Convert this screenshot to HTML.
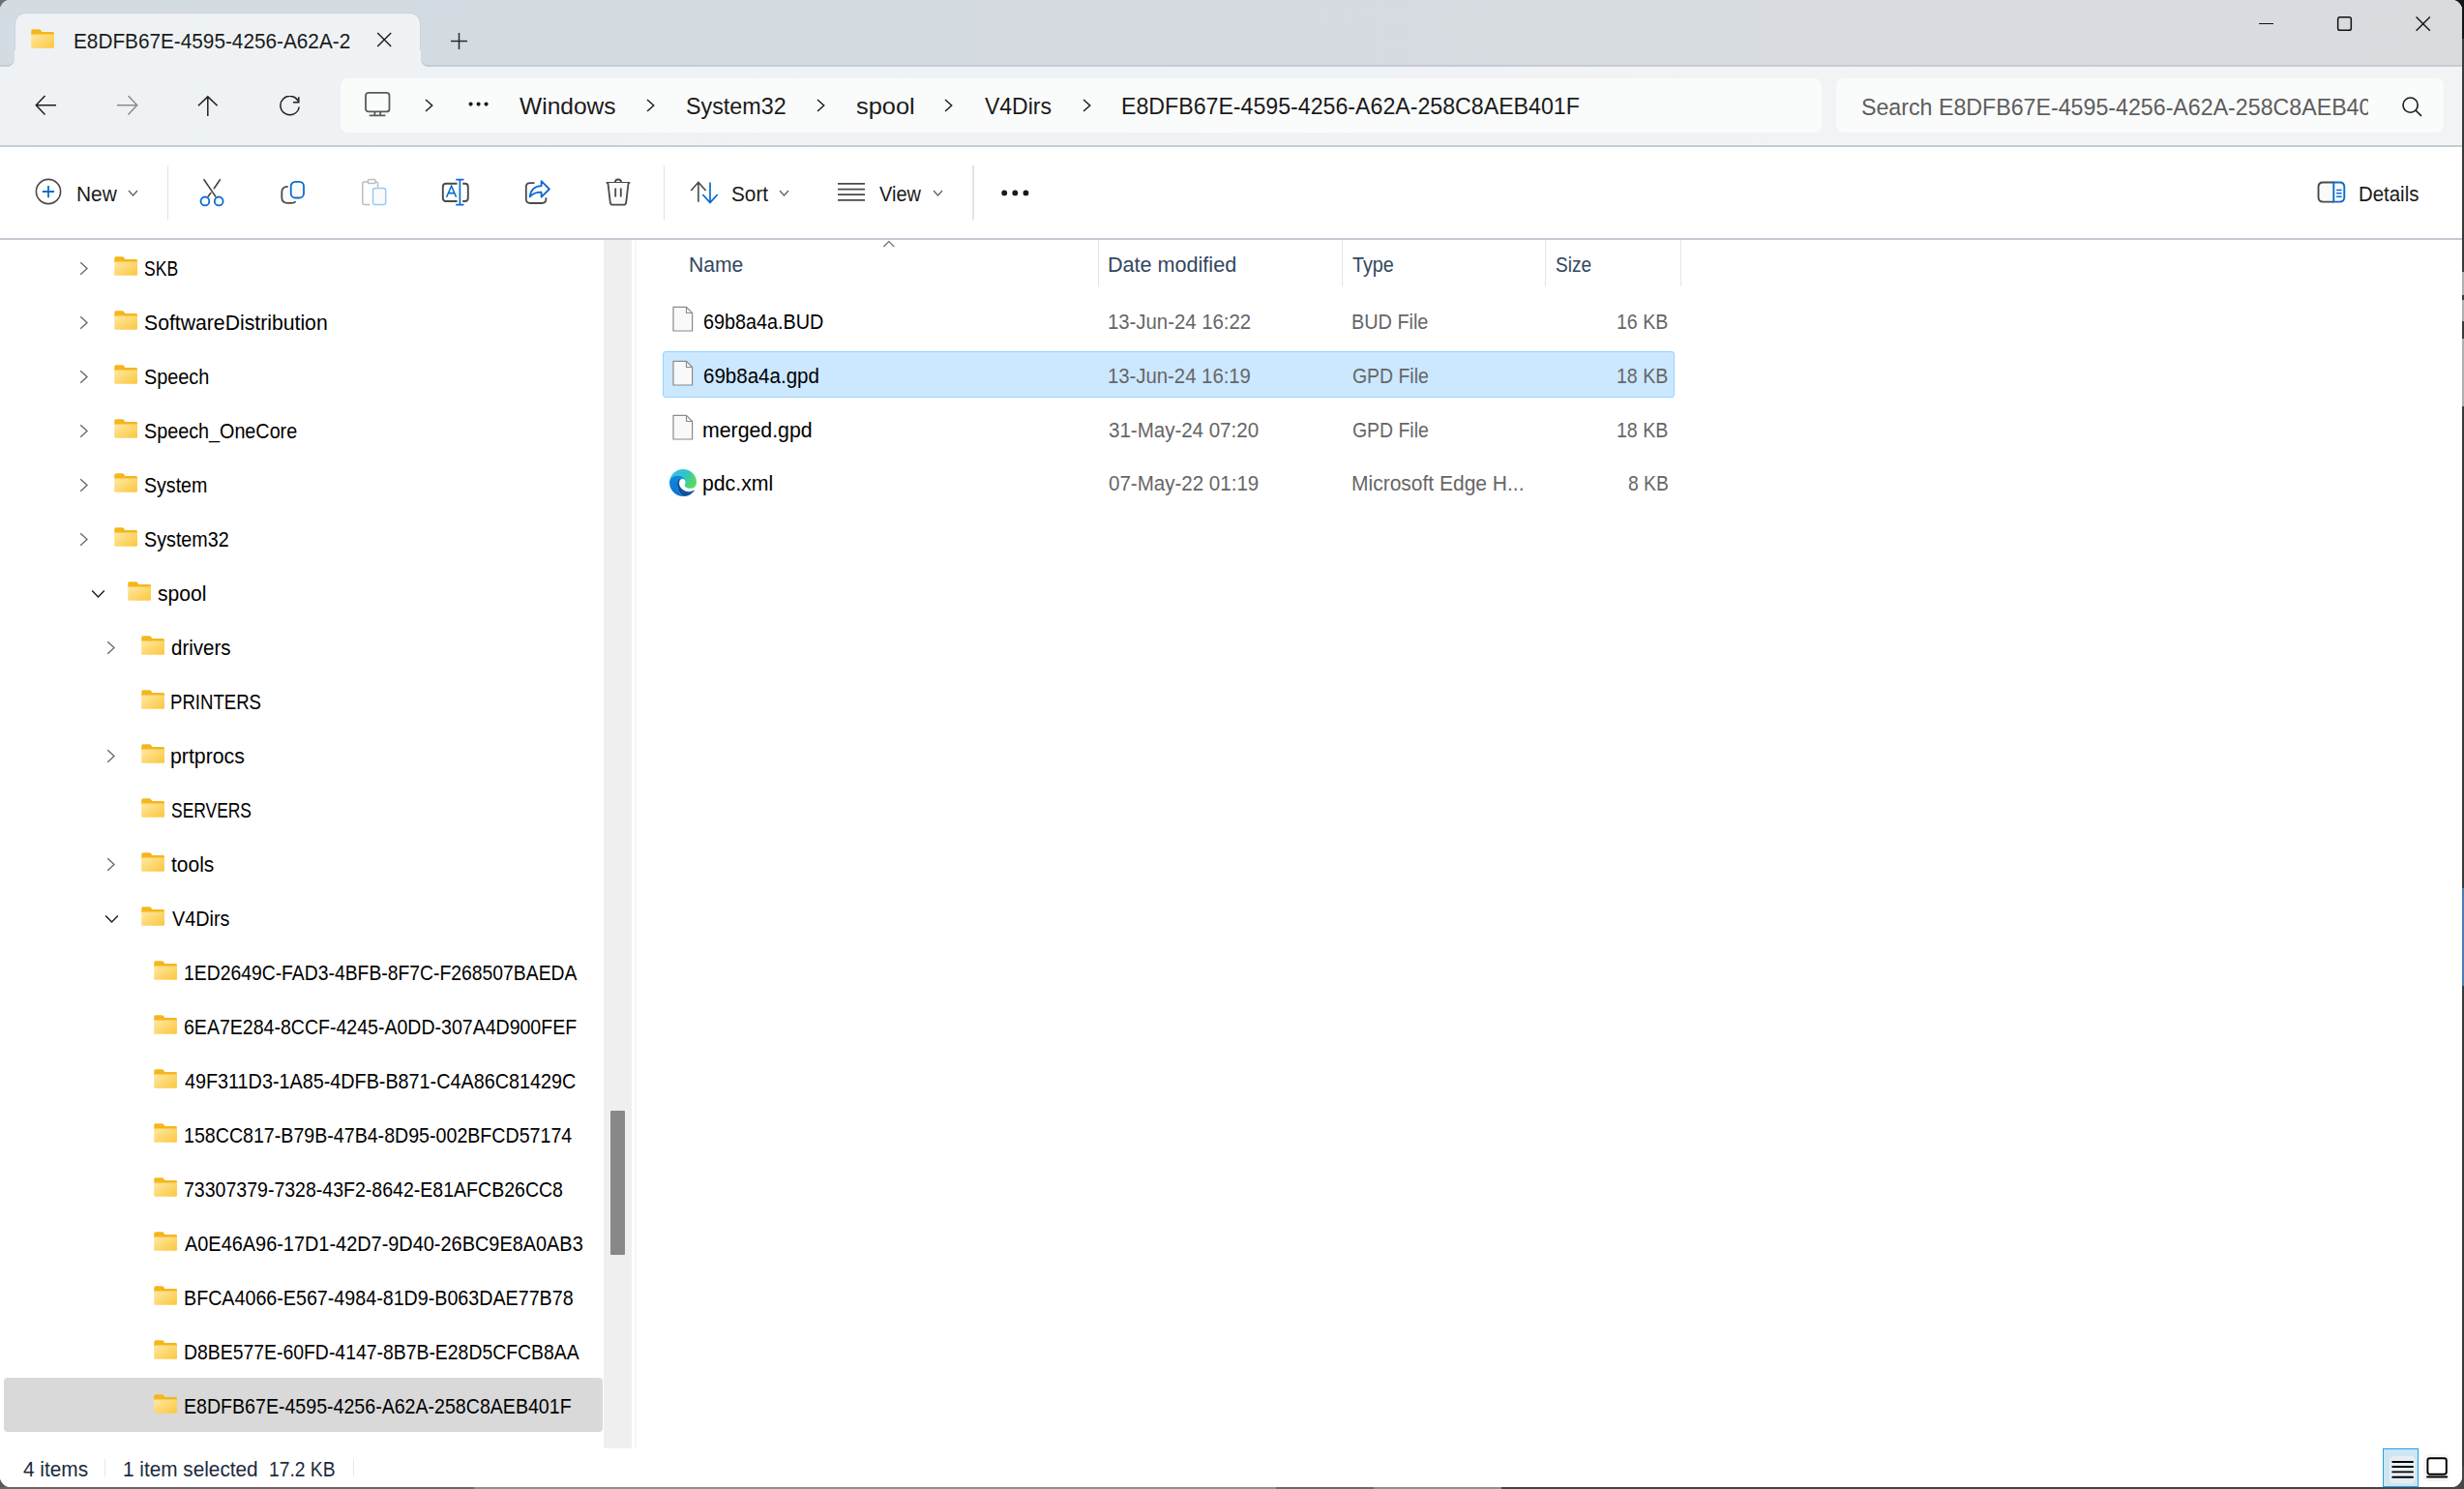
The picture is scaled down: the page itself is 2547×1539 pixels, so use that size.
<!DOCTYPE html>
<html><head><meta charset="utf-8"><title>File Explorer</title>
<style>
*{margin:0;padding:0;box-sizing:border-box}
html,body{width:2547px;height:1539px;overflow:hidden}
body{background:#3c3c3c;font-family:"Liberation Sans",sans-serif;position:relative}
.win{position:absolute;left:0;top:0;width:2545px;height:1537px;border-radius:11px;overflow:hidden;background:#fff}
.a{position:absolute;display:block}
.t{position:absolute;white-space:nowrap;transform-origin:0 0}
</style></head><body>
<div class="a" style="left:2520px;top:0px;width:27px;height:1539px;background:#3b3b3b"></div>
<div class="a" style="left:2520px;top:0px;width:27px;height:40px;background:#151515"></div>
<div class="a" style="left:0px;top:0px;width:30px;height:30px;background:#6f6f6f"></div>
<div class="a" style="left:2545px;top:281px;width:2px;height:24px;background:#b0b0b0"></div>
<div class="a" style="left:2545px;top:310px;width:2px;height:22px;background:#b0b0b0"></div>
<div class="a" style="left:2545px;top:350px;width:2px;height:70px;background:#b0b0b0"></div>
<div class="a" style="left:2545px;top:918px;width:2px;height:101px;background:#4a7db5"></div>
<div class="a" style="left:0px;top:1515px;width:1552px;height:24px;background:#8f8f8f"></div>
<div class="a" style="left:1552px;top:1515px;width:995px;height:24px;background:#474747"></div>
<div class="a" style="left:0px;top:1515px;width:30px;height:24px;background:#5a5a5a"></div>
<div class="a" style="left:0px;top:1537px;width:490px;height:2px;background:#666"></div>
<div class="a" style="left:1319px;top:1537px;width:101px;height:2px;background:#6a6a6a"></div>
<div class="win">
<div class="a" style="left:0px;top:0px;width:2545px;height:151px;background:linear-gradient(90deg,#eef2f5 0px,#f0f3f5 1200px,#f2f3f5 2545px)"></div>
<div class="a" style="left:0px;top:0px;width:2545px;height:40px;background:linear-gradient(90deg,#d2dce2 0px,#d3dbe1 700px,#d6dbe1 1300px,#d9dcdf 2545px)"></div>
<div class="a" style="left:0px;top:0px;width:15px;height:69px;background:linear-gradient(90deg,#d2dce2 0px,#d3dbe1 700px,#d6dbe1 1300px,#d9dcdf 2545px);border-bottom:2px solid #c4ccd4;border-bottom-right-radius:8px"></div>
<div class="a" style="left:435px;top:0px;width:2110px;height:69px;background:linear-gradient(90deg,#d2dce2 0px,#d3dbe1 700px,#d6dbe1 1300px,#d9dcdf 2545px);background-position:-435px 0;background-size:2545px 69px;border-bottom:2px solid #c4ccd4;border-bottom-left-radius:8px"></div>
<div class="a" style="left:15px;top:13px;width:420px;height:45px;background:linear-gradient(90deg,#eef2f5 0px,#f0f3f5 1200px,#f2f3f5 2545px);border-radius:11px 11px 0 0;border:1px solid #cdd3d9;border-bottom:none"></div>
<div class="a" style="left:15px;top:52px;width:420px;height:17px;background:linear-gradient(90deg,#eef2f5 0px,#f0f3f5 1200px,#f2f3f5 2545px)"></div>
<div class="a" style="left:0px;top:150px;width:2545px;height:2px;background:#c5ccd3"></div>
<div class="a" style="left:0px;top:152px;width:2545px;height:94px;background:#fff"></div>
<div class="a" style="left:0px;top:246px;width:2545px;height:2px;background:#c3cad1"></div>
<div class="a" style="left:0px;top:248px;width:2545px;height:1289px;background:#fff"></div>
<svg class="a" style="left:32px;top:30px;" width="25" height="20" viewBox="0 0 25 20"><defs><linearGradient id="fg1" x1="0" y1="0" x2="1" y2="1"><stop offset="0" stop-color="#ffe9a6"/><stop offset="1" stop-color="#fbc73c"/></linearGradient></defs><path d="M0.3 1.8 Q0.3 0.2 1.9 0.2 L8.3 0.2 Q9.6 0.2 10.4 1.4 L11.3 3 L22.6 3 Q23.9 3 23.9 4.2 L23.9 6 L0.3 6 Z" fill="#f5b61c"/><rect x="0.2" y="5.2" width="23.8" height="14.6" rx="1.2" fill="url(#fg1)"/><rect x="0.2" y="5.2" width="23.8" height="0.9" fill="#f6c23c" opacity="0.6"/></svg>
<div class="t" style="left:75.84px;top:32.08px;font-size:22.5px;line-height:22.5px;color:#1a1a1a;transform:scaleX(0.9227);">E8DFB67E-4595-4256-A62A-2</div>
<svg class="a" style="left:389px;top:33px;" width="17" height="16" viewBox="0 0 17 16"><path d="M1.2 1 L15.2 15 M15.2 1 L1.2 15" stroke="#1c1c1c" stroke-width="1.4" fill="none"/></svg>
<svg class="a" style="left:465px;top:33px;" width="19" height="19" viewBox="0 0 19 19"><path d="M9.5 1 V18 M1 9.5 H18" stroke="#2a2a2a" stroke-width="1.5" fill="none"/></svg>
<div class="a" style="left:2335px;top:23.6px;width:15px;height:1.3px;background:#111"></div>
<svg class="a" style="left:2415px;top:16px;" width="18" height="18" viewBox="0 0 18 18"><rect x="1.65" y="1.65" width="13.7" height="13.7" rx="2.2" stroke="#111" stroke-width="1.5" fill="none"/></svg>
<svg class="a" style="left:2496px;top:16px;" width="18" height="18" viewBox="0 0 18 18"><path d="M1.6 1.6 L15.8 15.8 M15.8 1.6 L1.6 15.8" stroke="#111" stroke-width="1.4" fill="none"/></svg>
<svg class="a" style="left:36px;top:98px;" width="23" height="22" viewBox="0 0 23 22"><path d="M10.5 1 L1.3 10.7 L10.5 20.4 M1.3 10.7 H22" stroke="#1f1f1f" stroke-width="1.5" fill="none" stroke-linecap="butt"/></svg>
<svg class="a" style="left:120px;top:98px;" width="23" height="22" viewBox="0 0 23 22"><path d="M12.5 1 L21.7 10.7 L12.5 20.4 M21.7 10.7 H1" stroke="#8c8c8c" stroke-width="1.5" fill="none"/></svg>
<svg class="a" style="left:204px;top:98px;" width="22" height="23" viewBox="0 0 22 23"><path d="M1 11.2 L10.8 1.9 L20.6 11.2 M10.8 1.9 V22" stroke="#1f1f1f" stroke-width="1.5" fill="none" stroke-linecap="butt"/></svg>
<svg class="a" style="left:288px;top:99px;" width="23" height="23" viewBox="0 0 23 23"><path d="M20.2 5.5 A9.7 9.7 0 1 0 21.2 11.5" stroke="#1f1f1f" stroke-width="1.5" fill="none" stroke-linecap="butt"/><path d="M20.8 1.2 V6.8 H15" stroke="#1f1f1f" stroke-width="1.5" fill="none" stroke-linecap="butt"/></svg>
<div class="a" style="left:352px;top:81px;width:1531px;height:56px;background:#fafbfb;border-radius:7px"></div>
<svg class="a" style="left:376px;top:94px;" width="28" height="28" viewBox="0 0 28 28"><rect x="2" y="1.8" width="24.5" height="19.6" rx="3" stroke="#5a5a5a" stroke-width="1.8" fill="none"/><path d="M11.4 21.5 V25 M17.2 21.5 V25 M5.8 25.3 H22.4" stroke="#5a5a5a" stroke-width="1.8" fill="none"/></svg>
<svg class="a" style="left:439px;top:102px;" width="9" height="14" viewBox="0 0 9 14"><path d="M1 1 L7.7 7.0 L1 13" stroke="#1f1f1f" stroke-width="1.5" fill="none"/></svg>
<svg class="a" style="left:483px;top:104px;" width="23" height="7" viewBox="0 0 23 7"><circle cx="3.6" cy="3.6" r="2.05" fill="#1a1a1a"/><circle cx="11.6" cy="3.6" r="2.05" fill="#1a1a1a"/><circle cx="19.6" cy="3.6" r="2.05" fill="#1a1a1a"/></svg>
<div class="t" style="left:537.28px;top:97.77px;font-size:24.5px;line-height:24.5px;color:#1a1a1a;transform:scaleX(1.0024);">Windows</div>
<svg class="a" style="left:668px;top:102px;" width="9" height="14" viewBox="0 0 9 14"><path d="M1 1 L7.7 7.0 L1 13" stroke="#1f1f1f" stroke-width="1.5" fill="none"/></svg>
<div class="t" style="left:708.85px;top:97.77px;font-size:24.5px;line-height:24.5px;color:#1a1a1a;transform:scaleX(0.9514);">System32</div>
<svg class="a" style="left:843.5px;top:102px;" width="9" height="14" viewBox="0 0 9 14"><path d="M1 1 L7.7 7.0 L1 13" stroke="#1f1f1f" stroke-width="1.5" fill="none"/></svg>
<div class="t" style="left:884.64px;top:97.77px;font-size:24.5px;line-height:24.5px;color:#1a1a1a;transform:scaleX(1.0351);">spool</div>
<svg class="a" style="left:975.5px;top:102px;" width="9" height="14" viewBox="0 0 9 14"><path d="M1 1 L7.7 7.0 L1 13" stroke="#1f1f1f" stroke-width="1.5" fill="none"/></svg>
<div class="t" style="left:1018.19px;top:97.77px;font-size:24.5px;line-height:24.5px;color:#1a1a1a;transform:scaleX(0.9377);">V4Dirs</div>
<svg class="a" style="left:1118.7px;top:102px;" width="9" height="14" viewBox="0 0 9 14"><path d="M1 1 L7.7 7.0 L1 13" stroke="#1f1f1f" stroke-width="1.5" fill="none"/></svg>
<div class="t" style="left:1159.15px;top:97.77px;font-size:24.5px;line-height:24.5px;color:#1a1a1a;transform:scaleX(0.9454);">E8DFB67E-4595-4256-A62A-258C8AEB401F</div>
<div class="a" style="left:1898px;top:81px;width:628px;height:56px;background:#fafbfb;border-radius:7px"></div>
<div class="a" style="left:1920px;top:85px;width:528px;height:45px;overflow:hidden">
<div class="t" style="left:4.46px;top:14.38px;font-size:24.5px;line-height:24.5px;color:#5d5d5d;transform:scaleX(0.9468);">Search E8DFB67E-4595-4256-A62A-258C8AEB401F</div>
</div>
<svg class="a" style="left:2482px;top:99px;" width="24" height="23" viewBox="0 0 24 23"><circle cx="9.6" cy="9.6" r="7.6" stroke="#1a1a1a" stroke-width="1.6" fill="none"/><path d="M15 15 L21 21" stroke="#1a1a1a" stroke-width="1.7"/></svg>
<svg class="a" style="left:36px;top:184px;" width="28" height="28" viewBox="0 0 28 28"><circle cx="14" cy="14" r="12.6" stroke="#4a4a4a" stroke-width="1.6" fill="none"/><path d="M14 8 V20.2 M7.9 14 H20.1" stroke="#0a6cd2" stroke-width="1.8"/></svg>
<div class="t" style="left:78.73px;top:190.92px;font-size:21.5px;line-height:21.5px;color:#1a1a1a;transform:scaleX(0.9713);">New</div>
<svg class="a" style="left:132px;top:196px;" width="11" height="7" viewBox="0 0 11 7"><path d="M1 1 L5.5 6 L10 1" stroke="#5e5e5e" stroke-width="1.2" fill="none"/></svg>
<div class="a" style="left:172.5px;top:171px;width:1.5px;height:56px;background:#e3e3e3"></div>
<svg class="a" style="left:205px;top:184px;" width="28" height="30" viewBox="0 0 28 30"><path d="M5.6 1.3 L18.2 19.6 M22.8 1.3 L15.9 11.2 M13.2 15 L9.8 19.6" stroke="#444" stroke-width="1.6" fill="none"/><circle cx="6.9" cy="23.9" r="4.4" stroke="#0a6cd2" stroke-width="1.8" fill="none"/><circle cx="21.2" cy="23.9" r="4.4" stroke="#0a6cd2" stroke-width="1.8" fill="none"/></svg>
<svg class="a" style="left:289px;top:185px;" width="28" height="28" viewBox="0 0 28 28"><path d="M8.7 7.8 H8.2 Q2.3 7.8 2.3 13.7 V19 Q2.3 24.9 8.2 24.9 H12.3 Q15.3 24.9 16.6 23.2" stroke="#4a4a4a" stroke-width="1.8" fill="#fafafa"/><rect x="11.7" y="2.9" width="13.3" height="16.6" rx="4.6" stroke="#0a6cd2" stroke-width="1.8" fill="#fafafa"/></svg>
<svg class="a" style="left:373px;top:184px;" width="28" height="30" viewBox="0 0 28 30"><path d="M7 4 H3.6 Q1.8 4 1.8 6 V25.5 Q1.8 27.4 3.8 27.4 H9.5" stroke="#bdbdbd" stroke-width="1.5" fill="none"/><path d="M17.5 9.5 V6 Q17.5 4 15.5 4 H14" stroke="#bdbdbd" stroke-width="1.5" fill="none"/><rect x="7.3" y="1.5" width="7.8" height="4" rx="1.8" stroke="#bdbdbd" stroke-width="1.5" fill="#fff"/><rect x="12.5" y="10.5" width="13.2" height="17" rx="2.3" stroke="#9ccaf2" stroke-width="1.5" fill="#fafafa"/></svg>
<svg class="a" style="left:456px;top:184px;" width="30" height="30" viewBox="0 0 30 30"><path d="M16.6 5.8 H5 Q1.8 5.8 1.8 9 V20.8 Q1.8 24 5 24 H16.6 M22.2 5.8 H24.5 Q27.8 5.8 27.8 9 V20.8 Q27.8 24 24.5 24 H22.2" stroke="#4a4a4a" stroke-width="1.9" fill="none"/><path d="M19.4 1.5 V27.7 M15.3 1.6 H23.5 M15.3 27.6 H23.5" stroke="#0a6cd2" stroke-width="1.7" fill="none"/><path d="M5.6 19.8 L10.6 8.3 L15.6 19.8 M7.5 15.6 H13.7" stroke="#0a6cd2" stroke-width="1.6" fill="none"/></svg>
<svg class="a" style="left:542px;top:185px;" width="28" height="28" viewBox="0 0 28 28"><path d="M10.5 4.1 H6 Q1.8 4.1 1.8 8.3 V20.8 Q1.8 25 6 25 H18.2 Q22.4 25 22.4 20.8 V19.2" stroke="#4a4a4a" stroke-width="1.8" fill="none"/><path d="M5.7 18.3 C6.5 11 11 7.5 17.6 7.2 V2.2 L25.9 10.5 L17.6 18.6 V13.7 C12.5 13.5 8.5 15.5 5.7 18.3 Z" stroke="#0a6cd2" stroke-width="1.8" fill="#fafafa" stroke-linejoin="round"/></svg>
<svg class="a" style="left:625px;top:184px;" width="28" height="30" viewBox="0 0 28 30"><path d="M1.6 4.8 H26.4 M10.7 4.5 Q11 1.5 14 1.5 Q17 1.5 17.3 4.5" stroke="#4a4a4a" stroke-width="1.8" fill="none"/><path d="M3.4 5 L5.8 25.3 Q6.1 27.6 8.4 27.6 H19.6 Q21.9 27.6 22.2 25.3 L24.6 5" stroke="#4a4a4a" stroke-width="1.8" fill="#fafafa"/><path d="M11.2 10.5 V19.5 M16.8 10.5 V19.5" stroke="#4a4a4a" stroke-width="1.8"/></svg>
<div class="a" style="left:685.5px;top:171px;width:1.5px;height:56px;background:#e3e3e3"></div>
<svg class="a" style="left:713px;top:187px;" width="31" height="24" viewBox="0 0 31 24"><path d="M1.2 10 L8.9 1.5 L16.6 10 M8.9 1.5 V21.7" stroke="#4a4a4a" stroke-width="1.6" fill="none"/><path d="M13.3 14 L21 22.4 L28.7 14 M21 22.4 V1.4" stroke="#0a6cd2" stroke-width="1.7" fill="none"/></svg>
<div class="t" style="left:755.66px;top:190.92px;font-size:21.5px;line-height:21.5px;color:#1a1a1a;transform:scaleX(0.9668);">Sort</div>
<svg class="a" style="left:804.5px;top:196px;" width="11" height="7" viewBox="0 0 11 7"><path d="M1 1 L5.5 6 L10 1" stroke="#5e5e5e" stroke-width="1.2" fill="none"/></svg>
<svg class="a" style="left:865px;top:188px;" width="30" height="21" viewBox="0 0 30 21"><path d="M1 1.9 H29 M1 7.6 H29 M1 13.2 H29 M1 18.9 H29" stroke="#4a4a4a" stroke-width="1.7"/></svg>
<div class="t" style="left:908.50px;top:190.92px;font-size:21.5px;line-height:21.5px;color:#1a1a1a;transform:scaleX(0.9281);">View</div>
<svg class="a" style="left:963.5px;top:196px;" width="11" height="7" viewBox="0 0 11 7"><path d="M1 1 L5.5 6 L10 1" stroke="#5e5e5e" stroke-width="1.2" fill="none"/></svg>
<div class="a" style="left:1005px;top:171px;width:1.5px;height:56px;background:#e3e3e3"></div>
<svg class="a" style="left:1034px;top:195px;" width="31" height="9" viewBox="0 0 31 9"><circle cx="4.2" cy="4.4" r="2.9" fill="#1a1a1a"/><circle cx="15.3" cy="4.4" r="2.9" fill="#1a1a1a"/><circle cx="26.4" cy="4.4" r="2.9" fill="#1a1a1a"/></svg>
<svg class="a" style="left:2395px;top:187px;" width="31" height="24" viewBox="0 0 31 24"><path d="M17.5 1.5 H6.3 Q1.5 1.5 1.5 6.3 V16.8 Q1.5 21.6 6.3 21.6 H17.5" stroke="#4a4a4a" stroke-width="1.9" fill="#fafafa"/><path d="M17.3 1.5 H23.5 Q28.3 1.5 28.3 6.3 V16.8 Q28.3 21.6 23.5 21.6 H17.3 Z" stroke="#0a6cd2" stroke-width="1.9" fill="#fafafa"/><path d="M20.7 9.5 H25 M20.7 12.8 H25 M20.7 16.3 H25" stroke="#0a6cd2" stroke-width="1.6" stroke-linecap="round"/></svg>
<div class="t" style="left:2438.37px;top:190.92px;font-size:21.5px;line-height:21.5px;color:#1a1a1a;transform:scaleX(0.9492);">Details</div>
<div class="a" style="left:624px;top:248px;width:29px;height:1249px;background:#efefef"></div>
<div class="a" style="left:631px;top:1148px;width:15px;height:149px;background:#888;border-radius:1px"></div>
<div class="a" style="left:656px;top:248px;width:2px;height:1249px;background:#f7f7f7"></div>
<div class="a" style="left:4px;top:1424px;width:619px;height:56px;background:#d9d9d9;border-radius:4px"></div>
<svg class="a" style="left:82px;top:269.8px;" width="10" height="15" viewBox="0 0 10 15"><path d="M1.2 1.2 L8 7.5 L1.2 13.8" stroke="#6b6b6b" stroke-width="1.4" fill="none"/></svg>
<svg class="a" style="left:117.7px;top:265.0px;" width="25" height="20" viewBox="0 0 25 20"><defs><linearGradient id="fg2" x1="0" y1="0" x2="1" y2="1"><stop offset="0" stop-color="#ffe9a6"/><stop offset="1" stop-color="#fbc73c"/></linearGradient></defs><path d="M0.3 1.8 Q0.3 0.2 1.9 0.2 L8.3 0.2 Q9.6 0.2 10.4 1.4 L11.3 3 L22.6 3 Q23.9 3 23.9 4.2 L23.9 6 L0.3 6 Z" fill="#f5b61c"/><rect x="0.2" y="5.2" width="23.8" height="14.6" rx="1.2" fill="url(#fg2)"/><rect x="0.2" y="5.2" width="23.8" height="0.9" fill="#f6c23c" opacity="0.6"/></svg>
<div class="t" style="left:149.01px;top:267.53px;font-size:21.5px;line-height:21.5px;color:#000;transform:scaleX(0.8155);">SKB</div>
<svg class="a" style="left:82px;top:325.8px;" width="10" height="15" viewBox="0 0 10 15"><path d="M1.2 1.2 L8 7.5 L1.2 13.8" stroke="#6b6b6b" stroke-width="1.4" fill="none"/></svg>
<svg class="a" style="left:117.7px;top:321.0px;" width="25" height="20" viewBox="0 0 25 20"><defs><linearGradient id="fg3" x1="0" y1="0" x2="1" y2="1"><stop offset="0" stop-color="#ffe9a6"/><stop offset="1" stop-color="#fbc73c"/></linearGradient></defs><path d="M0.3 1.8 Q0.3 0.2 1.9 0.2 L8.3 0.2 Q9.6 0.2 10.4 1.4 L11.3 3 L22.6 3 Q23.9 3 23.9 4.2 L23.9 6 L0.3 6 Z" fill="#f5b61c"/><rect x="0.2" y="5.2" width="23.8" height="14.6" rx="1.2" fill="url(#fg3)"/><rect x="0.2" y="5.2" width="23.8" height="0.9" fill="#f6c23c" opacity="0.6"/></svg>
<div class="t" style="left:148.85px;top:323.53px;font-size:21.5px;line-height:21.5px;color:#000;transform:scaleX(0.9860);">SoftwareDistribution</div>
<svg class="a" style="left:82px;top:381.8px;" width="10" height="15" viewBox="0 0 10 15"><path d="M1.2 1.2 L8 7.5 L1.2 13.8" stroke="#6b6b6b" stroke-width="1.4" fill="none"/></svg>
<svg class="a" style="left:117.7px;top:377.0px;" width="25" height="20" viewBox="0 0 25 20"><defs><linearGradient id="fg4" x1="0" y1="0" x2="1" y2="1"><stop offset="0" stop-color="#ffe9a6"/><stop offset="1" stop-color="#fbc73c"/></linearGradient></defs><path d="M0.3 1.8 Q0.3 0.2 1.9 0.2 L8.3 0.2 Q9.6 0.2 10.4 1.4 L11.3 3 L22.6 3 Q23.9 3 23.9 4.2 L23.9 6 L0.3 6 Z" fill="#f5b61c"/><rect x="0.2" y="5.2" width="23.8" height="14.6" rx="1.2" fill="url(#fg4)"/><rect x="0.2" y="5.2" width="23.8" height="0.9" fill="#f6c23c" opacity="0.6"/></svg>
<div class="t" style="left:148.91px;top:379.53px;font-size:21.5px;line-height:21.5px;color:#000;transform:scaleX(0.9231);">Speech</div>
<svg class="a" style="left:82px;top:437.8px;" width="10" height="15" viewBox="0 0 10 15"><path d="M1.2 1.2 L8 7.5 L1.2 13.8" stroke="#6b6b6b" stroke-width="1.4" fill="none"/></svg>
<svg class="a" style="left:117.7px;top:433.0px;" width="25" height="20" viewBox="0 0 25 20"><defs><linearGradient id="fg5" x1="0" y1="0" x2="1" y2="1"><stop offset="0" stop-color="#ffe9a6"/><stop offset="1" stop-color="#fbc73c"/></linearGradient></defs><path d="M0.3 1.8 Q0.3 0.2 1.9 0.2 L8.3 0.2 Q9.6 0.2 10.4 1.4 L11.3 3 L22.6 3 Q23.9 3 23.9 4.2 L23.9 6 L0.3 6 Z" fill="#f5b61c"/><rect x="0.2" y="5.2" width="23.8" height="14.6" rx="1.2" fill="url(#fg5)"/><rect x="0.2" y="5.2" width="23.8" height="0.9" fill="#f6c23c" opacity="0.6"/></svg>
<div class="t" style="left:148.91px;top:435.53px;font-size:21.5px;line-height:21.5px;color:#000;transform:scaleX(0.9191);">Speech_OneCore</div>
<svg class="a" style="left:82px;top:493.8px;" width="10" height="15" viewBox="0 0 10 15"><path d="M1.2 1.2 L8 7.5 L1.2 13.8" stroke="#6b6b6b" stroke-width="1.4" fill="none"/></svg>
<svg class="a" style="left:117.7px;top:489.0px;" width="25" height="20" viewBox="0 0 25 20"><defs><linearGradient id="fg6" x1="0" y1="0" x2="1" y2="1"><stop offset="0" stop-color="#ffe9a6"/><stop offset="1" stop-color="#fbc73c"/></linearGradient></defs><path d="M0.3 1.8 Q0.3 0.2 1.9 0.2 L8.3 0.2 Q9.6 0.2 10.4 1.4 L11.3 3 L22.6 3 Q23.9 3 23.9 4.2 L23.9 6 L0.3 6 Z" fill="#f5b61c"/><rect x="0.2" y="5.2" width="23.8" height="14.6" rx="1.2" fill="url(#fg6)"/><rect x="0.2" y="5.2" width="23.8" height="0.9" fill="#f6c23c" opacity="0.6"/></svg>
<div class="t" style="left:148.92px;top:491.53px;font-size:21.5px;line-height:21.5px;color:#000;transform:scaleX(0.9115);">System</div>
<svg class="a" style="left:82px;top:549.8px;" width="10" height="15" viewBox="0 0 10 15"><path d="M1.2 1.2 L8 7.5 L1.2 13.8" stroke="#6b6b6b" stroke-width="1.4" fill="none"/></svg>
<svg class="a" style="left:117.7px;top:545.0px;" width="25" height="20" viewBox="0 0 25 20"><defs><linearGradient id="fg7" x1="0" y1="0" x2="1" y2="1"><stop offset="0" stop-color="#ffe9a6"/><stop offset="1" stop-color="#fbc73c"/></linearGradient></defs><path d="M0.3 1.8 Q0.3 0.2 1.9 0.2 L8.3 0.2 Q9.6 0.2 10.4 1.4 L11.3 3 L22.6 3 Q23.9 3 23.9 4.2 L23.9 6 L0.3 6 Z" fill="#f5b61c"/><rect x="0.2" y="5.2" width="23.8" height="14.6" rx="1.2" fill="url(#fg7)"/><rect x="0.2" y="5.2" width="23.8" height="0.9" fill="#f6c23c" opacity="0.6"/></svg>
<div class="t" style="left:148.91px;top:547.52px;font-size:21.5px;line-height:21.5px;color:#000;transform:scaleX(0.9174);">System32</div>
<svg class="a" style="left:93.5px;top:608.8px;" width="15" height="10" viewBox="0 0 15 10"><path d="M1.2 1.5 L7.5 8 L13.8 1.5" stroke="#1f1f1f" stroke-width="1.5" fill="none"/></svg>
<svg class="a" style="left:131.7px;top:601.0px;" width="25" height="20" viewBox="0 0 25 20"><defs><linearGradient id="fg8" x1="0" y1="0" x2="1" y2="1"><stop offset="0" stop-color="#ffe9a6"/><stop offset="1" stop-color="#fbc73c"/></linearGradient></defs><path d="M0.3 1.8 Q0.3 0.2 1.9 0.2 L8.3 0.2 Q9.6 0.2 10.4 1.4 L11.3 3 L22.6 3 Q23.9 3 23.9 4.2 L23.9 6 L0.3 6 Z" fill="#f5b61c"/><rect x="0.2" y="5.2" width="23.8" height="14.6" rx="1.2" fill="url(#fg8)"/><rect x="0.2" y="5.2" width="23.8" height="0.9" fill="#f6c23c" opacity="0.6"/></svg>
<div class="t" style="left:163.17px;top:603.52px;font-size:21.5px;line-height:21.5px;color:#000;transform:scaleX(0.9809);">spool</div>
<svg class="a" style="left:110px;top:661.8px;" width="10" height="15" viewBox="0 0 10 15"><path d="M1.2 1.2 L8 7.5 L1.2 13.8" stroke="#6b6b6b" stroke-width="1.4" fill="none"/></svg>
<svg class="a" style="left:145.7px;top:657.0px;" width="25" height="20" viewBox="0 0 25 20"><defs><linearGradient id="fg9" x1="0" y1="0" x2="1" y2="1"><stop offset="0" stop-color="#ffe9a6"/><stop offset="1" stop-color="#fbc73c"/></linearGradient></defs><path d="M0.3 1.8 Q0.3 0.2 1.9 0.2 L8.3 0.2 Q9.6 0.2 10.4 1.4 L11.3 3 L22.6 3 Q23.9 3 23.9 4.2 L23.9 6 L0.3 6 Z" fill="#f5b61c"/><rect x="0.2" y="5.2" width="23.8" height="14.6" rx="1.2" fill="url(#fg9)"/><rect x="0.2" y="5.2" width="23.8" height="0.9" fill="#f6c23c" opacity="0.6"/></svg>
<div class="t" style="left:176.98px;top:659.52px;font-size:21.5px;line-height:21.5px;color:#000;transform:scaleX(0.9525);">drivers</div>
<svg class="a" style="left:145.7px;top:713.0px;" width="25" height="20" viewBox="0 0 25 20"><defs><linearGradient id="fg10" x1="0" y1="0" x2="1" y2="1"><stop offset="0" stop-color="#ffe9a6"/><stop offset="1" stop-color="#fbc73c"/></linearGradient></defs><path d="M0.3 1.8 Q0.3 0.2 1.9 0.2 L8.3 0.2 Q9.6 0.2 10.4 1.4 L11.3 3 L22.6 3 Q23.9 3 23.9 4.2 L23.9 6 L0.3 6 Z" fill="#f5b61c"/><rect x="0.2" y="5.2" width="23.8" height="14.6" rx="1.2" fill="url(#fg10)"/><rect x="0.2" y="5.2" width="23.8" height="0.9" fill="#f6c23c" opacity="0.6"/></svg>
<div class="t" style="left:176.31px;top:715.52px;font-size:21.5px;line-height:21.5px;color:#000;transform:scaleX(0.8642);">PRINTERS</div>
<svg class="a" style="left:110px;top:773.8px;" width="10" height="15" viewBox="0 0 10 15"><path d="M1.2 1.2 L8 7.5 L1.2 13.8" stroke="#6b6b6b" stroke-width="1.4" fill="none"/></svg>
<svg class="a" style="left:145.7px;top:769.0px;" width="25" height="20" viewBox="0 0 25 20"><defs><linearGradient id="fg11" x1="0" y1="0" x2="1" y2="1"><stop offset="0" stop-color="#ffe9a6"/><stop offset="1" stop-color="#fbc73c"/></linearGradient></defs><path d="M0.3 1.8 Q0.3 0.2 1.9 0.2 L8.3 0.2 Q9.6 0.2 10.4 1.4 L11.3 3 L22.6 3 Q23.9 3 23.9 4.2 L23.9 6 L0.3 6 Z" fill="#f5b61c"/><rect x="0.2" y="5.2" width="23.8" height="14.6" rx="1.2" fill="url(#fg11)"/><rect x="0.2" y="5.2" width="23.8" height="0.9" fill="#f6c23c" opacity="0.6"/></svg>
<div class="t" style="left:176.42px;top:771.52px;font-size:21.5px;line-height:21.5px;color:#000;transform:scaleX(0.9899);">prtprocs</div>
<svg class="a" style="left:145.7px;top:825.0px;" width="25" height="20" viewBox="0 0 25 20"><defs><linearGradient id="fg12" x1="0" y1="0" x2="1" y2="1"><stop offset="0" stop-color="#ffe9a6"/><stop offset="1" stop-color="#fbc73c"/></linearGradient></defs><path d="M0.3 1.8 Q0.3 0.2 1.9 0.2 L8.3 0.2 Q9.6 0.2 10.4 1.4 L11.3 3 L22.6 3 Q23.9 3 23.9 4.2 L23.9 6 L0.3 6 Z" fill="#f5b61c"/><rect x="0.2" y="5.2" width="23.8" height="14.6" rx="1.2" fill="url(#fg12)"/><rect x="0.2" y="5.2" width="23.8" height="0.9" fill="#f6c23c" opacity="0.6"/></svg>
<div class="t" style="left:177.02px;top:827.52px;font-size:21.5px;line-height:21.5px;color:#000;transform:scaleX(0.8107);">SERVERS</div>
<svg class="a" style="left:110px;top:885.8px;" width="10" height="15" viewBox="0 0 10 15"><path d="M1.2 1.2 L8 7.5 L1.2 13.8" stroke="#6b6b6b" stroke-width="1.4" fill="none"/></svg>
<svg class="a" style="left:145.7px;top:881.0px;" width="25" height="20" viewBox="0 0 25 20"><defs><linearGradient id="fg13" x1="0" y1="0" x2="1" y2="1"><stop offset="0" stop-color="#ffe9a6"/><stop offset="1" stop-color="#fbc73c"/></linearGradient></defs><path d="M0.3 1.8 Q0.3 0.2 1.9 0.2 L8.3 0.2 Q9.6 0.2 10.4 1.4 L11.3 3 L22.6 3 Q23.9 3 23.9 4.2 L23.9 6 L0.3 6 Z" fill="#f5b61c"/><rect x="0.2" y="5.2" width="23.8" height="14.6" rx="1.2" fill="url(#fg13)"/><rect x="0.2" y="5.2" width="23.8" height="0.9" fill="#f6c23c" opacity="0.6"/></svg>
<div class="t" style="left:177.49px;top:883.52px;font-size:21.5px;line-height:21.5px;color:#000;transform:scaleX(0.9754);">tools</div>
<svg class="a" style="left:107.5px;top:944.8px;" width="15" height="10" viewBox="0 0 15 10"><path d="M1.2 1.5 L7.5 8 L13.8 1.5" stroke="#1f1f1f" stroke-width="1.5" fill="none"/></svg>
<svg class="a" style="left:145.7px;top:937.0px;" width="25" height="20" viewBox="0 0 25 20"><defs><linearGradient id="fg14" x1="0" y1="0" x2="1" y2="1"><stop offset="0" stop-color="#ffe9a6"/><stop offset="1" stop-color="#fbc73c"/></linearGradient></defs><path d="M0.3 1.8 Q0.3 0.2 1.9 0.2 L8.3 0.2 Q9.6 0.2 10.4 1.4 L11.3 3 L22.6 3 Q23.9 3 23.9 4.2 L23.9 6 L0.3 6 Z" fill="#f5b61c"/><rect x="0.2" y="5.2" width="23.8" height="14.6" rx="1.2" fill="url(#fg14)"/><rect x="0.2" y="5.2" width="23.8" height="0.9" fill="#f6c23c" opacity="0.6"/></svg>
<div class="t" style="left:177.70px;top:939.52px;font-size:21.5px;line-height:21.5px;color:#000;transform:scaleX(0.9208);">V4Dirs</div>
<svg class="a" style="left:159.2px;top:993.0px;" width="25" height="20" viewBox="0 0 25 20"><defs><linearGradient id="fg15" x1="0" y1="0" x2="1" y2="1"><stop offset="0" stop-color="#ffe9a6"/><stop offset="1" stop-color="#fbc73c"/></linearGradient></defs><path d="M0.3 1.8 Q0.3 0.2 1.9 0.2 L8.3 0.2 Q9.6 0.2 10.4 1.4 L11.3 3 L22.6 3 Q23.9 3 23.9 4.2 L23.9 6 L0.3 6 Z" fill="#f5b61c"/><rect x="0.2" y="5.2" width="23.8" height="14.6" rx="1.2" fill="url(#fg15)"/><rect x="0.2" y="5.2" width="23.8" height="0.9" fill="#f6c23c" opacity="0.6"/></svg>
<div class="t" style="left:189.85px;top:995.52px;font-size:21.5px;line-height:21.5px;color:#000;transform:scaleX(0.8998);">1ED2649C-FAD3-4BFB-8F7C-F268507BAEDA</div>
<svg class="a" style="left:159.2px;top:1049.0px;" width="25" height="20" viewBox="0 0 25 20"><defs><linearGradient id="fg16" x1="0" y1="0" x2="1" y2="1"><stop offset="0" stop-color="#ffe9a6"/><stop offset="1" stop-color="#fbc73c"/></linearGradient></defs><path d="M0.3 1.8 Q0.3 0.2 1.9 0.2 L8.3 0.2 Q9.6 0.2 10.4 1.4 L11.3 3 L22.6 3 Q23.9 3 23.9 4.2 L23.9 6 L0.3 6 Z" fill="#f5b61c"/><rect x="0.2" y="5.2" width="23.8" height="14.6" rx="1.2" fill="url(#fg16)"/><rect x="0.2" y="5.2" width="23.8" height="0.9" fill="#f6c23c" opacity="0.6"/></svg>
<div class="t" style="left:190.32px;top:1051.52px;font-size:21.5px;line-height:21.5px;color:#000;transform:scaleX(0.9087);">6EA7E284-8CCF-4245-A0DD-307A4D900FEF</div>
<svg class="a" style="left:159.2px;top:1105.0px;" width="25" height="20" viewBox="0 0 25 20"><defs><linearGradient id="fg17" x1="0" y1="0" x2="1" y2="1"><stop offset="0" stop-color="#ffe9a6"/><stop offset="1" stop-color="#fbc73c"/></linearGradient></defs><path d="M0.3 1.8 Q0.3 0.2 1.9 0.2 L8.3 0.2 Q9.6 0.2 10.4 1.4 L11.3 3 L22.6 3 Q23.9 3 23.9 4.2 L23.9 6 L0.3 6 Z" fill="#f5b61c"/><rect x="0.2" y="5.2" width="23.8" height="14.6" rx="1.2" fill="url(#fg17)"/><rect x="0.2" y="5.2" width="23.8" height="0.9" fill="#f6c23c" opacity="0.6"/></svg>
<div class="t" style="left:190.90px;top:1107.52px;font-size:21.5px;line-height:21.5px;color:#000;transform:scaleX(0.9200);">49F311D3-1A85-4DFB-B871-C4A86C81429C</div>
<svg class="a" style="left:159.2px;top:1161.0px;" width="25" height="20" viewBox="0 0 25 20"><defs><linearGradient id="fg18" x1="0" y1="0" x2="1" y2="1"><stop offset="0" stop-color="#ffe9a6"/><stop offset="1" stop-color="#fbc73c"/></linearGradient></defs><path d="M0.3 1.8 Q0.3 0.2 1.9 0.2 L8.3 0.2 Q9.6 0.2 10.4 1.4 L11.3 3 L22.6 3 Q23.9 3 23.9 4.2 L23.9 6 L0.3 6 Z" fill="#f5b61c"/><rect x="0.2" y="5.2" width="23.8" height="14.6" rx="1.2" fill="url(#fg18)"/><rect x="0.2" y="5.2" width="23.8" height="0.9" fill="#f6c23c" opacity="0.6"/></svg>
<div class="t" style="left:189.83px;top:1163.52px;font-size:21.5px;line-height:21.5px;color:#000;transform:scaleX(0.9122);">158CC817-B79B-47B4-8D95-002BFCD57174</div>
<svg class="a" style="left:159.2px;top:1217.0px;" width="25" height="20" viewBox="0 0 25 20"><defs><linearGradient id="fg19" x1="0" y1="0" x2="1" y2="1"><stop offset="0" stop-color="#ffe9a6"/><stop offset="1" stop-color="#fbc73c"/></linearGradient></defs><path d="M0.3 1.8 Q0.3 0.2 1.9 0.2 L8.3 0.2 Q9.6 0.2 10.4 1.4 L11.3 3 L22.6 3 Q23.9 3 23.9 4.2 L23.9 6 L0.3 6 Z" fill="#f5b61c"/><rect x="0.2" y="5.2" width="23.8" height="14.6" rx="1.2" fill="url(#fg19)"/><rect x="0.2" y="5.2" width="23.8" height="0.9" fill="#f6c23c" opacity="0.6"/></svg>
<div class="t" style="left:190.32px;top:1219.52px;font-size:21.5px;line-height:21.5px;color:#000;transform:scaleX(0.9084);">73307379-7328-43F2-8642-E81AFCB26CC8</div>
<svg class="a" style="left:159.2px;top:1273.0px;" width="25" height="20" viewBox="0 0 25 20"><defs><linearGradient id="fg20" x1="0" y1="0" x2="1" y2="1"><stop offset="0" stop-color="#ffe9a6"/><stop offset="1" stop-color="#fbc73c"/></linearGradient></defs><path d="M0.3 1.8 Q0.3 0.2 1.9 0.2 L8.3 0.2 Q9.6 0.2 10.4 1.4 L11.3 3 L22.6 3 Q23.9 3 23.9 4.2 L23.9 6 L0.3 6 Z" fill="#f5b61c"/><rect x="0.2" y="5.2" width="23.8" height="14.6" rx="1.2" fill="url(#fg20)"/><rect x="0.2" y="5.2" width="23.8" height="0.9" fill="#f6c23c" opacity="0.6"/></svg>
<div class="t" style="left:191.30px;top:1275.52px;font-size:21.5px;line-height:21.5px;color:#000;transform:scaleX(0.9260);">A0E46A96-17D1-42D7-9D40-26BC9E8A0AB3</div>
<svg class="a" style="left:159.2px;top:1329.0px;" width="25" height="20" viewBox="0 0 25 20"><defs><linearGradient id="fg21" x1="0" y1="0" x2="1" y2="1"><stop offset="0" stop-color="#ffe9a6"/><stop offset="1" stop-color="#fbc73c"/></linearGradient></defs><path d="M0.3 1.8 Q0.3 0.2 1.9 0.2 L8.3 0.2 Q9.6 0.2 10.4 1.4 L11.3 3 L22.6 3 Q23.9 3 23.9 4.2 L23.9 6 L0.3 6 Z" fill="#f5b61c"/><rect x="0.2" y="5.2" width="23.8" height="14.6" rx="1.2" fill="url(#fg21)"/><rect x="0.2" y="5.2" width="23.8" height="0.9" fill="#f6c23c" opacity="0.6"/></svg>
<div class="t" style="left:189.73px;top:1331.52px;font-size:21.5px;line-height:21.5px;color:#000;transform:scaleX(0.9154);">BFCA4066-E567-4984-81D9-B063DAE77B78</div>
<svg class="a" style="left:159.2px;top:1385.0px;" width="25" height="20" viewBox="0 0 25 20"><defs><linearGradient id="fg22" x1="0" y1="0" x2="1" y2="1"><stop offset="0" stop-color="#ffe9a6"/><stop offset="1" stop-color="#fbc73c"/></linearGradient></defs><path d="M0.3 1.8 Q0.3 0.2 1.9 0.2 L8.3 0.2 Q9.6 0.2 10.4 1.4 L11.3 3 L22.6 3 Q23.9 3 23.9 4.2 L23.9 6 L0.3 6 Z" fill="#f5b61c"/><rect x="0.2" y="5.2" width="23.8" height="14.6" rx="1.2" fill="url(#fg22)"/><rect x="0.2" y="5.2" width="23.8" height="0.9" fill="#f6c23c" opacity="0.6"/></svg>
<div class="t" style="left:189.75px;top:1387.52px;font-size:21.5px;line-height:21.5px;color:#000;transform:scaleX(0.9023);">D8BE577E-60FD-4147-8B7B-E28D5CFCB8AA</div>
<svg class="a" style="left:159.2px;top:1441.0px;" width="25" height="20" viewBox="0 0 25 20"><defs><linearGradient id="fg23" x1="0" y1="0" x2="1" y2="1"><stop offset="0" stop-color="#ffe9a6"/><stop offset="1" stop-color="#fbc73c"/></linearGradient></defs><path d="M0.3 1.8 Q0.3 0.2 1.9 0.2 L8.3 0.2 Q9.6 0.2 10.4 1.4 L11.3 3 L22.6 3 Q23.9 3 23.9 4.2 L23.9 6 L0.3 6 Z" fill="#f5b61c"/><rect x="0.2" y="5.2" width="23.8" height="14.6" rx="1.2" fill="url(#fg23)"/><rect x="0.2" y="5.2" width="23.8" height="0.9" fill="#f6c23c" opacity="0.6"/></svg>
<div class="t" style="left:189.73px;top:1443.52px;font-size:21.5px;line-height:21.5px;color:#000;transform:scaleX(0.9108);">E8DFB67E-4595-4256-A62A-258C8AEB401F</div>
<div class="t" style="left:712.21px;top:263.73px;font-size:21.5px;line-height:21.5px;color:#33475f;transform:scaleX(0.9815);">Name</div>
<div class="t" style="left:1145.27px;top:263.73px;font-size:21.5px;line-height:21.5px;color:#33475f;transform:scaleX(1.0036);">Date modified</div>
<div class="t" style="left:1398.30px;top:263.73px;font-size:21.5px;line-height:21.5px;color:#33475f;transform:scaleX(0.9192);">Type</div>
<div class="t" style="left:1607.84px;top:263.73px;font-size:21.5px;line-height:21.5px;color:#33475f;transform:scaleX(0.8851);">Size</div>
<svg class="a" style="left:912px;top:248px;" width="14" height="9" viewBox="0 0 14 9"><path d="M1.3 7 L6.8 1.6 L12.3 7" stroke="#6a6a6a" stroke-width="1.1" fill="none"/></svg>
<div class="a" style="left:1134.5px;top:248px;width:1.2px;height:48px;background:#e5e5e5"></div>
<div class="a" style="left:1387px;top:248px;width:1.2px;height:48px;background:#e5e5e5"></div>
<div class="a" style="left:1597px;top:248px;width:1.2px;height:48px;background:#e5e5e5"></div>
<div class="a" style="left:1737px;top:248px;width:1.2px;height:48px;background:#e5e5e5"></div>
<div class="a" style="left:685px;top:363px;width:1046px;height:48px;background:#cce8ff;border:1px solid #99d1ff;border-radius:3px"></div>
<div class="t" style="left:726.61px;top:322.93px;font-size:21.5px;line-height:21.5px;color:#000;transform:scaleX(0.9205);">69b8a4a.BUD</div>
<div class="t" style="left:1145.38px;top:322.93px;font-size:21.5px;line-height:21.5px;color:#666666;transform:scaleX(0.9452);">13-Jun-24 16:22</div>
<div class="t" style="left:1397.11px;top:322.93px;font-size:21.5px;line-height:21.5px;color:#666666;transform:scaleX(0.9230);">BUD File</div>
<div class="t" style="left:1671.23px;top:322.93px;font-size:21.5px;line-height:21.5px;color:#666666;transform:scaleX(0.9087);">16 KB</div>
<svg class="a" style="left:695px;top:316px;" width="22" height="27" viewBox="0 0 22 27"><path d="M1 1.4 H14.5 L20.6 7.5 V26 H1 Z" stroke="#8a8a8a" stroke-width="1.2" fill="#f9f9f9"/><path d="M14.5 1.4 V7.5 H20.6" stroke="#8a8a8a" stroke-width="1.1" fill="none"/></svg>
<div class="t" style="left:726.57px;top:378.78px;font-size:21.5px;line-height:21.5px;color:#000;transform:scaleX(0.9554);">69b8a4a.gpd</div>
<div class="t" style="left:1145.38px;top:378.78px;font-size:21.5px;line-height:21.5px;color:#666666;transform:scaleX(0.9445);">13-Jun-24 16:19</div>
<div class="t" style="left:1397.73px;top:378.78px;font-size:21.5px;line-height:21.5px;color:#666666;transform:scaleX(0.9032);">GPD File</div>
<div class="t" style="left:1671.23px;top:378.78px;font-size:21.5px;line-height:21.5px;color:#666666;transform:scaleX(0.9087);">18 KB</div>
<svg class="a" style="left:695px;top:372px;" width="22" height="27" viewBox="0 0 22 27"><path d="M1 1.4 H14.5 L20.6 7.5 V26 H1 Z" stroke="#8a8a8a" stroke-width="1.2" fill="#f9f9f9"/><path d="M14.5 1.4 V7.5 H20.6" stroke="#8a8a8a" stroke-width="1.1" fill="none"/></svg>
<div class="t" style="left:726.22px;top:434.62px;font-size:21.5px;line-height:21.5px;color:#000;transform:scaleX(0.9901);">merged.gpd</div>
<div class="t" style="left:1146.08px;top:434.62px;font-size:21.5px;line-height:21.5px;color:#666666;transform:scaleX(0.9538);">31-May-24 07:20</div>
<div class="t" style="left:1397.73px;top:434.62px;font-size:21.5px;line-height:21.5px;color:#666666;transform:scaleX(0.9032);">GPD File</div>
<div class="t" style="left:1671.23px;top:434.62px;font-size:21.5px;line-height:21.5px;color:#666666;transform:scaleX(0.9087);">18 KB</div>
<svg class="a" style="left:695px;top:428px;" width="22" height="27" viewBox="0 0 22 27"><path d="M1 1.4 H14.5 L20.6 7.5 V26 H1 Z" stroke="#8a8a8a" stroke-width="1.2" fill="#f9f9f9"/><path d="M14.5 1.4 V7.5 H20.6" stroke="#8a8a8a" stroke-width="1.1" fill="none"/></svg>
<div class="t" style="left:726.22px;top:490.48px;font-size:21.5px;line-height:21.5px;color:#000;transform:scaleX(0.9878);">pdc.xml</div>
<div class="t" style="left:1146.08px;top:490.48px;font-size:21.5px;line-height:21.5px;color:#666666;transform:scaleX(0.9551);">07-May-22 01:19</div>
<div class="t" style="left:1397.02px;top:490.48px;font-size:21.5px;line-height:21.5px;color:#666666;transform:scaleX(0.9766);">Microsoft Edge H...</div>
<div class="t" style="left:1682.53px;top:490.48px;font-size:21.5px;line-height:21.5px;color:#666666;transform:scaleX(0.8988);">8 KB</div>
<svg class="a" style="left:692px;top:485px;" width="28" height="28" viewBox="0 0 28 28"><defs><linearGradient id="eg1" x1="0" y1="0.3" x2="1" y2="0.7"><stop offset="0" stop-color="#36bff3"/><stop offset="0.5" stop-color="#2fc4c6"/><stop offset="1" stop-color="#5cdf4e"/></linearGradient><linearGradient id="eg2" x1="0" y1="0" x2="0.3" y2="1"><stop offset="0" stop-color="#0f8ddf"/><stop offset="1" stop-color="#0672d6"/></linearGradient></defs><path d="M0 14 C0 6.3 6.3 0 14 0 C21.8 0 28 6 28 13.5 C28 17.6 25.2 19.8 21.6 19.8 C19 19.8 16.8 18.9 16 17.5 L14 14 Z" fill="url(#eg1)"/><path d="M0 14 C0 10 3.5 6.8 8.2 6.8 C11.8 6.8 14.6 8.3 15.8 10.6 C14.6 9.6 13.2 9.3 12 9.5 C9.8 9.9 8.2 12 8 15 C7.8 21 11 26.5 14.5 28 C6.5 28 0 21.7 0 14 Z" fill="url(#eg2)"/><path d="M12 9.5 C9.8 9.9 8.2 12 8 15 C7.8 21 11 26.5 14.5 28 C19.5 28 23.8 25.5 26.4 21.3 C25.4 21.6 23.5 23 21 23.2 C17 23.4 13.5 21.5 11.3 18.4 C9.8 16.3 9.9 13 10.8 11.6 C11.3 10.6 12 10 12.8 9.6 Z" fill="#0f519d"/><ellipse cx="13.4" cy="13.8" rx="3.1" ry="3.7" fill="#fff"/></svg>
<div class="t" style="left:23.88px;top:1508.52px;font-size:21.5px;line-height:21.5px;color:#1c2b40;transform:scaleX(0.9684);">4 items</div>
<div class="a" style="left:108px;top:1508px;width:1.2px;height:18px;background:#e8e8e8"></div>
<div class="t" style="left:127.04px;top:1508.52px;font-size:21.5px;line-height:21.5px;color:#1c2b40;transform:scaleX(0.9655);">1 item selected</div>
<div class="t" style="left:278.05px;top:1508.52px;font-size:21.5px;line-height:21.5px;color:#1c2b40;transform:scaleX(0.8963);">17.2 KB</div>
<div class="a" style="left:364.5px;top:1508px;width:1.2px;height:18px;background:#e8e8e8"></div>
<div class="a" style="left:2463px;top:1497px;width:37px;height:40px;background:#cce6f4;border:1px solid #2a9fe0"></div>
<div class="a" style="left:2470px;top:1505px;width:27.3px;height:27.8px;background:#e6eef3;border-radius:5px"></div>
<svg class="a" style="left:2472px;top:1509px;" width="23" height="20" viewBox="0 0 23 20"><path d="M1.2 2 H22 M1.2 7 H22 M1.2 12.4 H22 M1.2 17.8 H22" stroke="#000" stroke-width="1.9" stroke-linecap="round"/></svg>
<div class="a" style="left:2505.3px;top:1503px;width:27px;height:27.6px;background:#f6f6f6;border-radius:5px"></div>
<svg class="a" style="left:2507px;top:1505px;" width="24" height="24" viewBox="0 0 24 24"><rect x="2.4" y="2.3" width="19.4" height="16.4" rx="2.2" stroke="#000" stroke-width="1.9" fill="#fff"/><path d="M2 21.5 H22.3" stroke="#000" stroke-width="1.8" stroke-linecap="round"/></svg>
</div>
</body></html>
